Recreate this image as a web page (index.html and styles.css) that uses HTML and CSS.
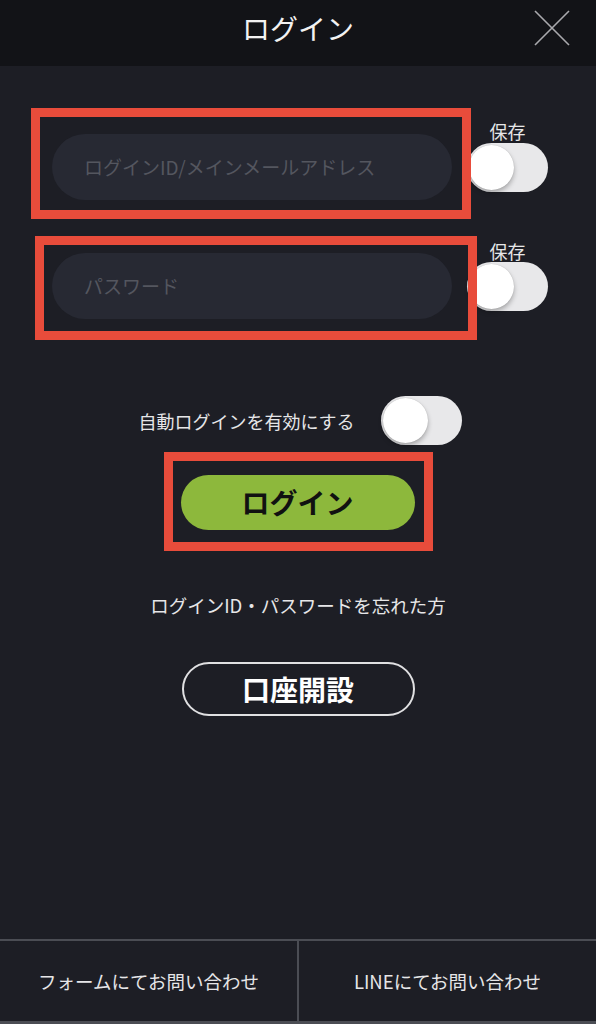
FILE: index.html
```html
<!DOCTYPE html>
<html lang="ja">
<head>
<meta charset="utf-8">
<title>ログイン</title>
<link rel="stylesheet" href="styles.css">
</head>
<body>
<div class="page">
  <header class="header">
    <h1 class="title">ログイン</h1>
    <button class="close" aria-label="閉じる">
      <svg width="36" height="36" viewBox="0 0 36 36"><path d="M1 1L35 35M35 1L1 35" stroke="#a9a9ad" stroke-width="1.6" fill="none"/></svg>
    </button>
  </header>

  <main class="main">
    <div class="row row-id">
      <div class="mark mark-id">
        <div class="field">ログインID/メインメールアドレス</div>
      </div>
      <div class="save save-id">
        <span class="save-label">保存</span>
        <span class="toggle"><span class="knob"></span></span>
      </div>
    </div>

    <div class="row row-pw">
      <div class="mark mark-pw">
        <div class="field">パスワード</div>
      </div>
      <div class="save save-pw">
        <span class="save-label">保存</span>
        <span class="toggle"><span class="knob"></span></span>
      </div>
    </div>

    <div class="auto">
      <span class="auto-label">自動ログインを有効にする</span>
      <span class="toggle"><span class="knob"></span></span>
    </div>

    <div class="mark mark-login">
      <button class="login-btn">ログイン</button>
    </div>

    <p class="forgot">ログインID・パスワードを忘れた方</p>

    <button class="open-btn">口座開設</button>
  </main>

  <footer class="footer">
    <div class="foot-item">フォームにてお問い合わせ</div>
    <div class="foot-item">LINEにてお問い合わせ</div>
  </footer>
</div>
</body>
</html>
```

FILE: styles.css
```css
* { box-sizing: border-box; }
html, body { margin: 0; padding: 0; }
body {
  background: #1d1e25;
  color: #e6e6e8;
  font-family: "Noto Sans CJK JP", "Noto Sans", sans-serif;
}
.page {
  width: 596px;
  min-height: 1024px;
  display: flex;
  flex-direction: column;
}
.header {
  height: 66px;
  background: #121317;
  display: flex;
  align-items: center;
  justify-content: center;
  position: relative;
}
.title {
  margin: -10px 0 0;
  font-size: 28px;
  font-weight: 400;
  color: #f2f2f2;
  line-height: 40px;
}
.close {
  position: absolute;
  right: 26px;
  top: 10px;
  width: 36px;
  height: 36px;
  padding: 0;
  border: 0;
  background: none;
  display: block;
}
.close svg { display: block; }

.main {
  display: flex;
  flex-direction: column;
}
.row { display: flex; align-items: flex-start; }
.row-id { margin-top: 42px; padding-left: 31px; }
.row-pw { margin-top: 17px; padding-left: 35px; }

.mark {
  border: 9px solid #e84c3b;
  position: relative;
  z-index: 2;
}
.mark-id { width: 440px; height: 111px; padding: 17px 0 0 12px; }
.mark-pw { width: 442px; height: 104px; padding: 8px 0 0 8px; }

.field {
  width: 400px;
  height: 66px;
  border-radius: 33px;
  background: #272933;
  color: #54565f;
  font-size: 19px;
  line-height: 66px;
  padding-left: 32px;
  white-space: nowrap;
}

.save {
  display: flex;
  flex-direction: column;
  align-items: center;
  width: 81px;
  position: relative;
  z-index: 1;
}
.save-id { margin-left: -4px; margin-top: 13px; }
.save-pw { margin-left: -10px; margin-top: 5px; }
.save-label {
  font-size: 18px;
  line-height: 20px;
  color: #e6e6e8;
  margin-bottom: 2px;
}
.save-pw .save-label { margin-bottom: 1px; }

.toggle {
  display: block;
  width: 81px;
  height: 49px;
  border-radius: 25px;
  background: #e8e8ea;
  padding: 2px;
}
.knob {
  display: block;
  width: 45px;
  height: 45px;
  border-radius: 50%;
  background: #ffffff;
  box-shadow: 0 3px 5px rgba(0, 0, 0, 0.28), 0 0 1px rgba(0, 0, 0, 0.2);
}

.auto {
  margin-top: 56px;
  display: flex;
  align-items: center;
  justify-content: center;
  gap: 26px;
  padding-left: 4px;
}
.auto-label {
  font-size: 18px;
  line-height: 24px;
  color: #e6e6e8;
}

.mark-login {
  width: 269px;
  height: 99px;
  margin: 7px auto 0;
  padding: 14px 0 0 8px;
}
.login-btn {
  display: block;
  width: 234px;
  height: 55px;
  border-radius: 28px;
  border: 0;
  background: #8db83c;
  color: #111111;
  font-family: "Noto Sans CJK JP", sans-serif;
  font-size: 28px;
  font-weight: 700;
  line-height: 55px;
  padding: 0;
}

.forgot {
  margin: 41px 0 0;
  text-align: center;
  font-size: 18.5px;
  line-height: 26px;
  color: #e6e6e8;
}

.open-btn {
  display: block;
  margin: 44px auto 0;
  width: 233px;
  height: 54px;
  border-radius: 27px;
  border: 2px solid #e0e0e2;
  background: transparent;
  color: #ffffff;
  font-family: "Noto Sans CJK JP", sans-serif;
  font-size: 28px;
  font-weight: 700;
  line-height: 50px;
  padding: 0;
}

.footer {
  margin-top: auto;
  height: 85px;
  border-top: 2px solid #4b4d54;
  border-bottom: 3px solid #4b4d54;
  display: flex;
}
.foot-item {
  flex: 1;
  display: flex;
  align-items: center;
  justify-content: center;
  font-size: 18.5px;
  color: #e6e6e8;
}
.foot-item + .foot-item { border-left: 2px solid #4b4d54; }
```
